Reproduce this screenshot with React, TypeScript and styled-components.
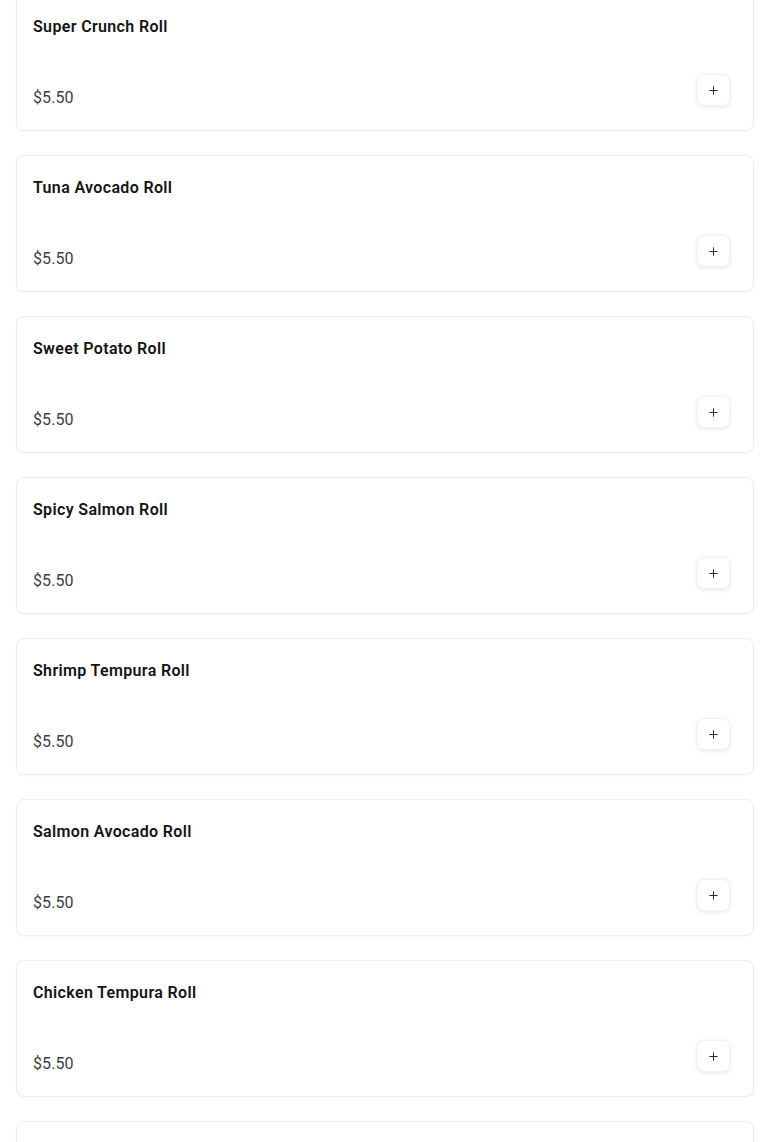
import React from 'react';
import styled, { createGlobalStyle } from 'styled-components';
import { Plus } from 'lucide-react';

const GlobalStyle = createGlobalStyle`
  html, body {
    margin: 0;
    padding: 0;
    background: #ffffff;
    overflow: hidden;
  }
  body {
    font-family: Roboto, "Liberation Sans", Arial, sans-serif;
    -webkit-font-smoothing: antialiased;
  }
`;

interface MenuItem {
  name: string;
  price: number;
}

const items: MenuItem[] = [
  { name: 'Super Crunch Roll', price: 5.5 },
  { name: 'Tuna Avocado Roll', price: 5.5 },
  { name: 'Sweet Potato Roll', price: 5.5 },
  { name: 'Spicy Salmon Roll', price: 5.5 },
  { name: 'Shrimp Tempura Roll', price: 5.5 },
  { name: 'Salmon Avocado Roll', price: 5.5 },
  { name: 'Chicken Tempura Roll', price: 5.5 },
  { name: 'California Roll', price: 5.5 },
];

const Viewport = styled.div`
  height: 100vh;
  overflow: hidden;
`;

// list is scrolled a few pixels, so the first card is cut at the top
const List = styled.div`
  display: flex;
  flex-direction: column;
  gap: 24px;
  margin-top: -6px;
  padding: 0 16px;
`;

const Card = styled.div`
  display: flex;
  flex-direction: column;
  background: #ffffff;
  border: 1px solid #ececec;
  border-radius: 8px;
  padding: 20px 23px 24px 16px;
  box-shadow: 0 1px 2px rgba(0, 0, 0, 0.03);
`;

const Title = styled.h3`
  margin: 0;
  font-size: 16px;
  line-height: 24px;
  font-weight: 600;
  letter-spacing: 0.35px;
  color: #141414;
`;

const Footer = styled.div`
  display: flex;
  justify-content: space-between;
  align-items: flex-end;
  margin-top: 35px;
`;

const Price = styled.span`
  font-size: 16px;
  line-height: 16px;
  letter-spacing: 0.1px;
  color: #3b3f45;
`;

const AddButton = styled.button`
  width: 33px;
  height: 32px;
  display: flex;
  align-items: center;
  justify-content: center;
  padding: 0;
  background: #ffffff;
  border: 1px solid #f1f1f1;
  border-radius: 7px;
  box-shadow: 0 1px 4px rgba(0, 0, 0, 0.1);
  color: #222;
  cursor: pointer;
`;

const App: React.FC = () => {
  return (
    <Viewport>
      <GlobalStyle />
      <List>
        {items.map((item) => (
          <Card key={item.name}>
            <Title>{item.name}</Title>
            <Footer>
              <Price>${item.price.toFixed(2)}</Price>
              <AddButton aria-label={`Add ${item.name}`}>
                <Plus size={13} strokeWidth={1.75} />
              </AddButton>
            </Footer>
          </Card>
        ))}
      </List>
    </Viewport>
  );
};

export default App;
